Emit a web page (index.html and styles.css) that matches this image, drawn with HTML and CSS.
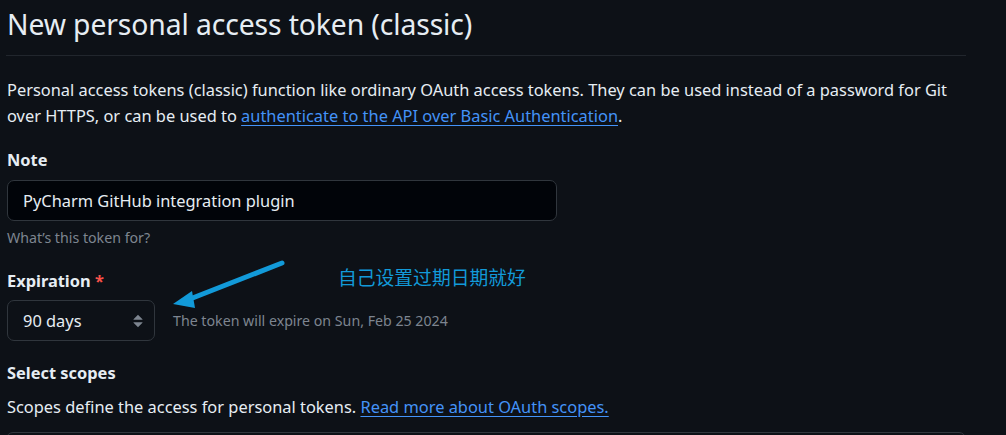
FILE: index.html
```html
<!DOCTYPE html>
<html lang="en">
<head>
<meta charset="utf-8">
<link rel="stylesheet" href="styles.css">
</head>
<body>
<div class="page">
  <h1 class="title">New personal access token (classic)</h1>
  <p class="intro">Personal access tokens (classic) function like ordinary OAuth access tokens. They can be used instead of a password for Git over HTTPS, or can be used to <a href="#" class="link">authenticate to the API over Basic Authentication</a>.</p>

  <div class="field field-note">
    <label class="label">Note</label>
    <div class="input">PyCharm GitHub integration plugin</div>
    <p class="note">What’s this token for?</p>
  </div>

  <div class="field field-exp">
    <label class="label">Expiration <span class="req">*</span></label>
    <div class="exp-row">
      <div class="select">
        <span>90 days</span>
        <svg class="caret" viewBox="0 0 16 16" width="20" height="20"><path fill="#7d8590" d="M4.427 9.427l3.396 3.396a.25.25 0 00.354 0l3.396-3.396A.25.25 0 0011.396 9H4.604a.25.25 0 00-.177.427zM4.427 6.573l3.396-3.396a.25.25 0 01.354 0l3.396 3.396A.25.25 0 0111.396 7H4.604a.25.25 0 01-.177-.427z"/></svg>
      </div>
      <span class="hint">The token will expire on Sun, Feb 25 2024</span>
    </div>
  </div>

  <div class="field field-scopes">
    <label class="label">Select scopes</label>
    <p class="scopes-text">Scopes define the access for personal tokens. <a href="#" class="link">Read more about OAuth scopes.</a></p>
    <div class="scope-box"></div>
  </div>
</div>

<div class="annotation">自己设置过期日期就好</div>
<svg class="arrow" width="130" height="60" viewBox="0 0 130 60">
  <line x1="122" y1="7" x2="30" y2="43" stroke="#129ad9" stroke-width="5" stroke-linecap="round"/>
  <polygon points="13,48 32,35 35,52" fill="#129ad9"/>
</svg>
</body>
</html>
```
FILE: styles.css
```css
html, body {
  margin: 0;
  padding: 0;
  background: #0d1117;
}
body {
  font-family: "Noto Sans", "Open Sans", sans-serif;
  color: #e6edf3;
  position: relative;
  height: 435px;
  overflow: hidden;
}
.page {
  width: 960px;
  padding: 0 0 0 6px;
}
.title {
  margin: 0;
  padding: 5px 0 12px 1px;
  font-size: 28.3px;
  font-weight: 400;
  line-height: 38px;
  border-bottom: 1px solid #21262d;
  letter-spacing: -0.1px;
}
.intro {
  margin: 21px 0 0 1px;
  font-size: 16.4px;
  line-height: 26px;
}
.link {
  color: #4493f8;
  text-decoration: underline;
  text-underline-offset: 3px;
}
.field-note { margin-top: 20px; }
.field-exp { margin-top: 22px; }
.field-scopes { margin-top: 21px; }
.label {
  display: block;
  font-size: 16.4px;
  font-weight: 700;
  line-height: 22px;
  margin-left: 1px;
}
.req { color: #f85149; }
.input {
  margin-top: 9px;
  width: 533px;
  height: 39px;
  border: 1px solid #30363d;
  border-radius: 7px;
  background: #010409;
  display: flex;
  align-items: center;
  padding-left: 15px;
  font-size: 16.4px;
  margin-left: 1px;
}
.note {
  margin: 7px 0 0 1px;
  font-size: 14.2px;
  line-height: 20px;
  color: #7d8590;
}
.exp-row {
  display: flex;
  align-items: center;
  margin-top: 8px;
  margin-left: 1px;
}
.select {
  width: 148px;
  height: 41px;
  box-sizing: border-box;
  border: 1px solid #30363d;
  border-radius: 7px;
  background: #0d1117;
  display: flex;
  align-items: center;
  justify-content: space-between;
  padding: 0 6px 0 15px;
  font-size: 16.4px;
}
.caret { display: block; }
.hint {
  margin-left: 18px;
  font-size: 14.2px;
  color: #7d8590;
}
.scopes-text {
  margin: 11px 0 0 1px;
  font-size: 16.4px;
  line-height: 24px;
}
.scope-box {
  margin-top: 13px;
  height: 40px;
  border: 1px solid #30363d;
  border-radius: 7px;
}
.annotation {
  position: absolute;
  left: 338px;
  top: 263px;
  font-family: "Noto Sans CJK SC", sans-serif;
  font-size: 18.8px;
  line-height: 28px;
  color: #129ad9;
}
.arrow {
  position: absolute;
  left: 160px;
  top: 256px;
}
```
